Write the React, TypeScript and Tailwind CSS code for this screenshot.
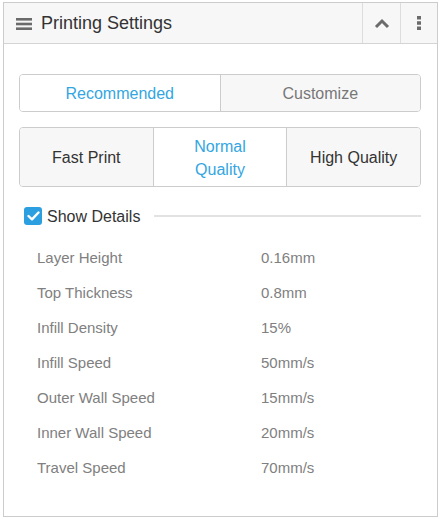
import React from "react";

const rows: [string, string][] = [
  ["Layer Height", "0.16mm"],
  ["Top Thickness", "0.8mm"],
  ["Infill Density", "15%"],
  ["Infill Speed", "50mm/s"],
  ["Outer Wall Speed", "15mm/s"],
  ["Inner Wall Speed", "20mm/s"],
  ["Travel Speed", "70mm/s"],
];

export default function App() {
  return (
    <div
      className="w-[441px] h-[519px] bg-white pt-[2px] pl-[3px]"
      style={{ fontFamily: '"Liberation Sans", Arial, sans-serif' }}
    >
      <div className="w-[435px] h-[515px] border border-[#cccccc] bg-white flex flex-col">
        {/* Header */}
        <div className="h-[41px] border-b border-[#d4d4d4] bg-[#f7f7f7] flex items-stretch">
          <div className="flex items-center flex-1 pl-[12px]">
            <svg width="16" height="12" viewBox="0 0 16 12" className="mt-[1px]">
              <rect x="0" y="0" width="16" height="2.6" fill="#6b6b6b" />
              <rect x="0" y="4.7" width="16" height="2.6" fill="#6b6b6b" />
              <rect x="0" y="9.4" width="16" height="2.6" fill="#6b6b6b" />
            </svg>
            <span className="ml-[9px] text-[18px] text-[#333333] leading-none">Printing Settings</span>
          </div>
          <div className="w-[38px] border-l border-[#dddddd] flex items-center justify-center">
            <svg width="16" height="11" viewBox="0 0 16 11">
              <path d="M2 9 L8 3 L14 9" fill="none" stroke="#6b6b6b" strokeWidth="3" />
            </svg>
          </div>
          <div className="w-[37px] border-l border-[#dddddd] flex items-center justify-center">
            <svg width="4" height="14" viewBox="0 0 4 14">
              <rect x="0" y="0" width="4" height="3.5" fill="#6b6b6b" />
              <rect x="0" y="5.25" width="4" height="3.5" fill="#6b6b6b" />
              <rect x="0" y="10.5" width="4" height="3.5" fill="#6b6b6b" />
            </svg>
          </div>
        </div>

        {/* Body */}
        <div className="pl-[15px] pr-[16px] pt-[30px]">
          <div className="h-[38px] flex border border-[#cccccc] rounded-[4px] overflow-hidden text-[16px]">
            <div className="flex-1 flex items-center justify-center bg-white text-[#33a6e2] pt-[2px]">Recommended</div>
            <div className="flex-1 flex items-center justify-center bg-[#f7f7f7] text-[#777777] border-l border-[#cccccc] pt-[2px]">
              Customize
            </div>
          </div>

          <div className="mt-[15px] h-[60px] flex border border-[#cccccc] rounded-[4px] overflow-hidden text-[16px] leading-[23px]">
            <div className="flex-1 flex items-center justify-center bg-[#f7f7f7] text-[#333333]">Fast Print</div>
            <div className="flex-1 flex flex-col items-center justify-center bg-white text-[#33a6e2] border-l border-[#cccccc] text-center pt-[1px]">
              <span>Normal</span>
              <span>Quality</span>
            </div>
            <div className="flex-1 flex items-center justify-center bg-[#f7f7f7] text-[#333333] border-l border-[#cccccc]">
              High Quality
            </div>
          </div>

          <div className="mt-[20px] h-[18px] flex items-center pl-[5px]">
            <div className="w-[18px] h-[18px] rounded-[3px] bg-[#2c9fe0] flex items-center justify-center">
              <svg width="13" height="10" viewBox="0 0 13 10">
                <path d="M1.5 5 L5 8.3 L11.5 1.5" fill="none" stroke="#ffffff" strokeWidth="2.4" strokeLinecap="round" strokeLinejoin="round" />
              </svg>
            </div>
            <span className="ml-[5px] text-[16px] text-[#333333] pt-[1px]">Show Details</span>
            <div className="ml-[14px] flex-1 h-[2px] bg-[#e2e2e2]" />
          </div>

          <div className="mt-[16px] pl-[18px]">
            {rows.map(([k, v]) => (
              <div key={k} className="h-[35px] flex items-center text-[15px] text-[#808080]">
                <span className="w-[224px]">{k}</span>
                <span>{v}</span>
              </div>
            ))}
          </div>
        </div>
      </div>
    </div>
  );
}
